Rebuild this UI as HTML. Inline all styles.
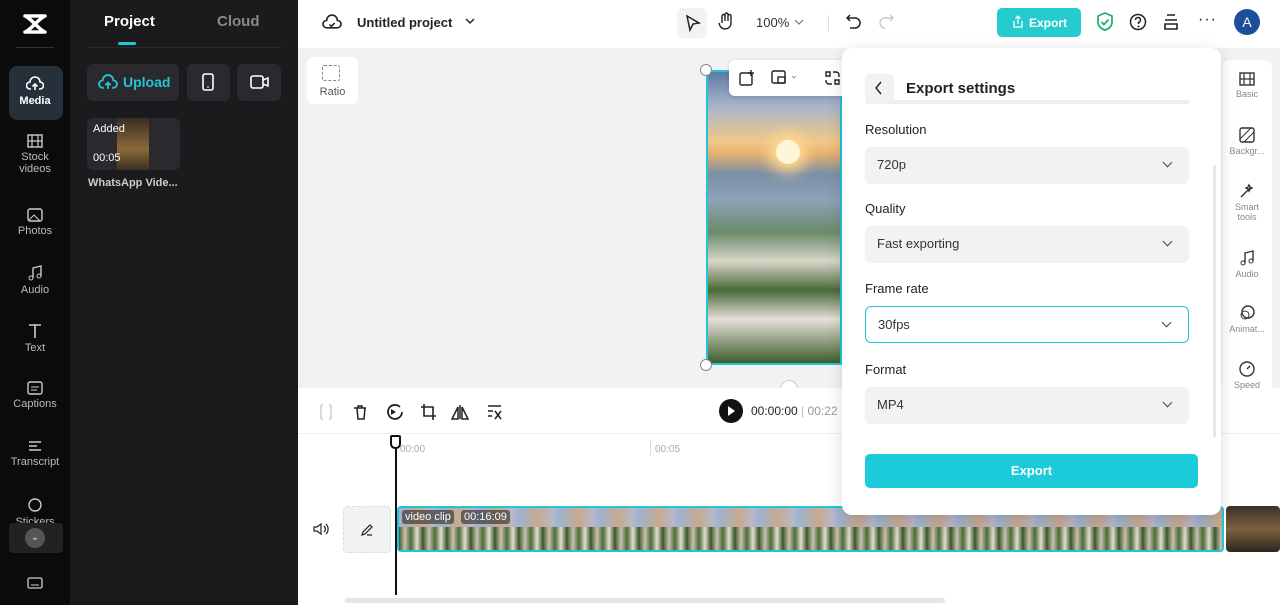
<!DOCTYPE html>
<html><head><meta charset="utf-8"><style>
*{box-sizing:border-box;margin:0;padding:0}
body{width:1280px;height:605px;overflow:hidden;font-family:"Liberation Sans",sans-serif;background:#fff;position:relative}
.abs{position:absolute}
.nav{left:0;top:0;width:70px;height:605px;background:#0b0b0c}
.navi{position:absolute;left:0;width:70px;text-align:center;color:#bbb;font-size:11px}
.navi svg{display:block;margin:0 auto 3px}
.panel{left:70px;top:0;width:228px;height:605px;background:#1b1b1e}
.top{left:298px;top:0;width:982px;height:48px;background:#fff}
.canvas{left:298px;top:48px;width:982px;height:340px;background:#f1f2f4}
.tl{left:298px;top:388px;width:982px;height:217px;background:#fff}
.sel{position:absolute;left:865px;width:324px;height:37px;background:#f1f2f4;border-radius:6px;font-size:13px;color:#333;padding:10px 12px}
.sel:after{content:"";position:absolute;right:18px;top:12px;width:6px;height:6px;border-right:1.5px solid #444;border-bottom:1.5px solid #444;transform:rotate(45deg)}
.lbl{position:absolute;left:865px;font-size:13px;color:#222}
.ri{position:absolute;left:1224px;width:46px;text-align:center;font-size:9px;color:#888}
.ri svg{display:block;margin:0 auto 3px}
</style></head><body>
<div class="abs nav">
  <svg class="abs" style="left:21px;top:12px" width="28" height="24" viewBox="0 0 28 24"><path d="M4 4h20M4 20h20M6 5C12 9 16 15 22 19M22 5C16 9 12 15 6 19" stroke="#fff" stroke-width="3.5" fill="none" stroke-linecap="round"/></svg>
  <div class="abs" style="left:16px;top:47px;width:38px;height:1px;background:#333"></div>
  <div class="abs" style="left:9px;top:66px;width:54px;height:54px;background:#26303a;border-radius:8px"></div>
  <div class="navi" style="top:76px;color:#fff;font-weight:bold"><svg width="18" height="16" viewBox="0 0 18 16"><path d="M5 13H4a3.5 3.5 0 0 1 0-7 5 5 0 0 1 10 0 3.5 3.5 0 0 1 0 7h-1M9 14V8M6.5 10.5L9 8l2.5 2.5" stroke="#fff" stroke-width="1.6" fill="none"/></svg>Media</div>
  <div class="navi" style="top:134px"><svg width="16" height="14"><rect x="1" y="1" width="14" height="12" stroke="#ccc" fill="none" stroke-width="1.4"/><path d="M5 1v12M11 1v12M1 7h14" stroke="#ccc" stroke-width="1.2"/></svg>Stock<br>videos</div>
  <div class="navi" style="top:208px"><svg width="16" height="14"><rect x="1" y="1" width="14" height="12" rx="2" stroke="#ccc" fill="none" stroke-width="1.4"/><path d="M2 12l5-5 6 6" stroke="#ccc" fill="none"/></svg>Photos</div>
  <div class="navi" style="top:265px"><svg width="16" height="16"><path d="M6 13V3l8-2v10" stroke="#ccc" fill="none" stroke-width="1.4"/><circle cx="4" cy="13" r="2" stroke="#ccc" fill="none"/><circle cx="12" cy="11" r="2" stroke="#ccc" fill="none"/></svg>Audio</div>
  <div class="navi" style="top:323px"><svg width="16" height="16"><path d="M2 2h12M8 2v13" stroke="#ccc" stroke-width="1.6"/></svg>Text</div>
  <div class="navi" style="top:381px"><svg width="16" height="14"><rect x="1" y="1" width="14" height="12" rx="2" stroke="#ccc" fill="none" stroke-width="1.4"/><path d="M4 6h8M4 9h6" stroke="#ccc"/></svg>Captions</div>
  <div class="navi" style="top:439px"><svg width="16" height="14"><path d="M2 3h12M2 7h8M2 11h12" stroke="#ccc" stroke-width="1.4"/></svg>Transcript</div>
  <div class="navi" style="top:497px"><svg width="16" height="16"><circle cx="8" cy="8" r="6" stroke="#ccc" fill="none" stroke-width="1.4"/></svg>Stickers</div>
  <div class="abs" style="left:9px;top:523px;width:54px;height:30px;background:#222;border-radius:4px"></div>
  <div class="abs" style="left:25px;top:528px;width:20px;height:20px;border-radius:50%;background:#555;color:#ddd;font-size:10px;text-align:center;line-height:20px">⌄</div>
  <svg class="abs" style="left:27px;top:577px" width="16" height="12"><rect x="1" y="1" width="14" height="10" rx="1.5" stroke="#ccc" fill="none" stroke-width="1.3"/><path d="M4 8h8" stroke="#ccc"/></svg>
</div>
<div class="abs panel">
  <div class="abs" style="left:34px;top:13px;color:#fff;font-weight:bold;font-size:15px">Project</div>
  <div class="abs" style="left:147px;top:13px;color:#888;font-weight:bold;font-size:15px">Cloud</div>
  <div class="abs" style="left:48px;top:42px;width:18px;height:3px;background:#20c5d8;border-radius:2px"></div>
  <div class="abs" style="left:18px;top:47px;width:193px;height:1px;background:#2c2c30"></div>
  <div class="abs" style="left:17px;top:64px;width:92px;height:37px;background:#2a2a2e;border-radius:6px;color:#25c3d6;font-weight:bold;font-size:14px;padding:10px 0 0 36px">Upload</div>
  <svg class="abs" style="left:28px;top:74px" width="20" height="17" viewBox="0 0 18 16"><path d="M5 13H4a3.5 3.5 0 0 1 0-7 5 5 0 0 1 10 0 3.5 3.5 0 0 1 0 7h-1M9 14V8M6.5 10.5L9 8l2.5 2.5" stroke="#25c3d6" stroke-width="1.7" fill="none"/></svg>
  <div class="abs" style="left:117px;top:64px;width:43px;height:37px;background:#2a2a2e;border-radius:6px"></div>
  <svg class="abs" style="left:132px;top:73px" width="12" height="18"><rect x="1" y="1" width="10" height="16" rx="2" stroke="#fff" fill="none" stroke-width="1.6"/><path d="M5 14h2" stroke="#fff"/></svg>
  <div class="abs" style="left:167px;top:64px;width:44px;height:37px;background:#2a2a2e;border-radius:6px"></div>
  <svg class="abs" style="left:180px;top:75px" width="20" height="14"><rect x="1" y="1" width="12" height="12" rx="2" stroke="#fff" fill="none" stroke-width="1.6"/><path d="M13 5l5-2v8l-5-2" stroke="#fff" fill="none" stroke-width="1.6"/></svg>
  <div class="abs" style="left:17px;top:118px;width:93px;height:52px;background:#2a2a2e;border-radius:6px;overflow:hidden"><div style="position:absolute;left:30px;top:0;width:32px;height:52px;background:linear-gradient(#3a2e22,#8a6a3a 60%,#3a3020)"></div></div>
  <div class="abs" style="left:23px;top:123px;color:#fff;font-size:11px">Added</div>
  <div class="abs" style="left:23px;top:152px;color:#fff;font-size:11px">00:05</div>
  <div class="abs" style="left:18px;top:177px;color:#ccc;font-size:11px;font-weight:bold">WhatsApp Vide...</div>
</div>
<div class="abs" style="left:298px;top:288px;width:8px;height:52px;background:#2a2a2e;border-radius:0 6px 6px 0"></div>
<div class="abs top">
  <svg class="abs" style="left:24px;top:14px" width="20" height="17" viewBox="0 0 18 16"><path d="M5 13H4a3.5 3.5 0 0 1 0-7 5 5 0 0 1 10 0 3.5 3.5 0 0 1 0 7zM6.5 10l2 1.5 3-3" stroke="#222" stroke-width="1.5" fill="none"/></svg>
  <div class="abs" style="left:59px;top:15px;font-size:13px;font-weight:bold;color:#222">Untitled project</div>
  <svg class="abs" style="left:167px;top:18px" width="10" height="7"><path d="M1 1l4 4 4-4" stroke="#222" stroke-width="1.5" fill="none"/></svg>
  <div class="abs" style="left:379px;top:8px;width:30px;height:30px;background:#f1f2f4;border-radius:6px"></div>
  <svg class="abs" style="left:387px;top:14px" width="16" height="18"><path d="M2 2l12 7-6 1-3 6z" stroke="#222" stroke-width="1.5" fill="none"/></svg>
  <svg class="abs" style="left:420px;top:12px" width="16" height="20"><path d="M4 11V4a1.5 1.5 0 0 1 3 0v5V2.5a1.5 1.5 0 0 1 3 0V9V4a1.5 1.5 0 0 1 3 0v8a6 6 0 0 1-11 2L1 11" stroke="#222" stroke-width="1.4" fill="none"/></svg>
  <div class="abs" style="left:458px;top:15px;font-size:13px;color:#333">100%</div>
  <svg class="abs" style="left:496px;top:19px" width="10" height="7"><path d="M1 1l4 4 4-4" stroke="#777" stroke-width="1.2" fill="none"/></svg>
  <div class="abs" style="left:530px;top:15px;width:1px;height:16px;background:#ddd"></div>
  <svg class="abs" style="left:548px;top:13px" width="16" height="18"><path d="M4 2L1 5l3 3M1 5h8a5 5 0 0 1 0 10H4" stroke="#222" stroke-width="1.5" fill="none"/></svg>
  <svg class="abs" style="left:580px;top:13px" width="16" height="18"><path d="M12 2l3 3-3 3M15 5H7a5 5 0 0 0 0 10" stroke="#ccc" stroke-width="1.5" fill="none"/></svg>
  <div class="abs" style="left:699px;top:8px;width:84px;height:29px;background:#26cbd0;border-radius:5px;color:#fff;font-size:12px;font-weight:bold;padding:8px 0 0 32px">Export</div>
  <svg class="abs" style="left:714px;top:15px" width="12" height="14"><path d="M2 6v6h8V6M6 9V1M3.5 3.5L6 1l2.5 2.5" stroke="#fff" stroke-width="1.3" fill="none"/></svg>
  <svg class="abs" style="left:798px;top:12px" width="18" height="20"><path d="M9 1l7 3v6c0 4-3 7-7 8-4-1-7-4-7-8V4z" stroke="#1fae6a" stroke-width="1.7" fill="none"/><path d="M5.5 10l2.5 2.5 4.5-5" stroke="#1fae6a" stroke-width="1.7" fill="none"/></svg>
  <svg class="abs" style="left:831px;top:13px" width="18" height="18"><circle cx="9" cy="9" r="7.5" stroke="#222" stroke-width="1.5" fill="none"/><path d="M6.5 7a2.5 2.5 0 1 1 3 2.4V11" stroke="#222" stroke-width="1.5" fill="none"/><circle cx="9.5" cy="13.5" r="1" fill="#222"/></svg>
  <svg class="abs" style="left:865px;top:13px" width="16" height="18"><path d="M4 2h8M2 7h12M2 11h12v5H2z" stroke="#222" stroke-width="1.6" fill="none"/></svg>
  <div class="abs" style="left:900px;top:11px;font-size:16px;color:#222;letter-spacing:1px">···</div>
  <div class="abs" style="left:936px;top:9px;width:26px;height:26px;border-radius:50%;background:#1b4f9a;color:#fff;font-size:14px;text-align:center;line-height:26px">A</div>
</div>
<div class="abs canvas"></div>
<div class="abs" style="left:307px;top:57px;width:51px;height:47px;background:#fff;border-radius:6px;font-size:11px;color:#555;text-align:center;padding-top:29px">Ratio</div>
<div class="abs" style="left:322px;top:65px;width:18px;height:16px;border:1.5px dashed #888;border-radius:2px"></div>
<div class="abs" style="left:706px;top:70px;width:136px;height:295px;border:2px solid #20c5d8;background:linear-gradient(180deg,#5c7aa8 0%,#a9b6c9 12%,#f2c788 24%,#e8b070 28%,#7a8fa6 35%,#8ea3b8 44%,#6b8a6a 55%,#d8d5c8 65%,#4a6a3a 75%,#e6e0d8 85%,#3c5c2c 100%)"></div>
<div class="abs" style="left:776px;top:140px;width:24px;height:24px;border-radius:50%;background:#fff6d8;box-shadow:0 0 14px 8px #ffd890"></div>
<div class="abs" style="left:700px;top:64px;width:12px;height:12px;border-radius:50%;background:#fff;border:1px solid #888"></div>
<div class="abs" style="left:700px;top:359px;width:12px;height:12px;border-radius:50%;background:#fff;border:1px solid #888"></div>
<div class="abs" style="left:780px;top:380px;width:18px;height:18px;border-radius:50%;background:#fff;border:1px solid #ccc"></div>
<div class="abs" style="left:729px;top:60px;width:120px;height:36px;background:#fff;border-radius:6px;box-shadow:0 1px 4px rgba(0,0,0,.12)"></div>
<svg class="abs" style="left:739px;top:70px" width="16" height="16"><rect x="1" y="3" width="12" height="12" rx="1.5" stroke="#222" stroke-width="1.4" fill="none"/><path d="M12 0v6M9 3h6" stroke="#222" stroke-width="1.4"/></svg>
<svg class="abs" style="left:771px;top:70px" width="26" height="16"><rect x="1" y="1" width="13" height="12" rx="1.5" stroke="#222" stroke-width="1.4" fill="none"/><rect x="7" y="7" width="7" height="6" stroke="#222" stroke-width="1.4" fill="none"/><path d="M21 6l2 2 2-2" stroke="#999" fill="none"/></svg>
<svg class="abs" style="left:825px;top:70px" width="16" height="16"><path d="M1 2h4v4H1zM8 2h3a3 3 0 0 1 3 3v2M1 10v1a3 3 0 0 0 3 3h3M10 10h4v4h-4z" stroke="#222" stroke-width="1.4" fill="none"/></svg>
<div class="abs tl"></div>
<div class="abs" style="left:298px;top:433px;width:982px;height:1px;background:#eceef0"></div>
<svg class="abs" style="left:318px;top:403px" width="200" height="18">
<path d="M3 2v14M13 2v14M3 2h2M3 16h2M11 2h2M11 16h2" stroke="#ccc" stroke-width="1.4"/>
<path d="M36 5h12M39 5l1 11h6l1-11M40 5V3h4v2" stroke="#222" stroke-width="1.5" fill="none"/>
<path d="M82 4a7 7 0 1 0 2 5" stroke="#222" stroke-width="1.8" fill="none"/><path d="M73 6l5 3-5 3z" fill="#222"/>
<path d="M106 1v12h12M103 4h12v13" stroke="#222" stroke-width="1.6" fill="none"/>
<path d="M142 2v14M140 16h-6l6-12zM144 4l6 12h-6z" stroke="#222" stroke-width="1.5" fill="none"/>
<path d="M170 3h13M170 8h5M170 13h4M177 8l6 8M183 8l-6 8" stroke="#222" stroke-width="1.5" fill="none"/>
</svg>
<div class="abs" style="left:719px;top:399px;width:24px;height:24px;border-radius:50%;background:#111"></div>
<div class="abs" style="left:728px;top:406px;width:0;height:0;border-left:7px solid #fff;border-top:5px solid transparent;border-bottom:5px solid transparent"></div>
<div class="abs" style="left:751px;top:404px;font-size:12px;color:#222">00:00:00 <span style="color:#bbb">|</span> <span style="color:#999">00:22</span></div>
<div class="abs" style="left:400px;top:444px;font-size:10px;color:#aaa">00:00</div>
<div class="abs" style="left:650px;top:440px;width:1px;height:16px;background:#ddd"></div>
<div class="abs" style="left:655px;top:444px;font-size:10px;color:#aaa">00:05</div>
<svg class="abs" style="left:313px;top:522px" width="16" height="14"><path d="M1 5h3l4-3v10l-4-3H1z M11 4a4 4 0 0 1 0 6M13 2a7 7 0 0 1 0 10" stroke="#222" stroke-width="1.2" fill="none"/></svg>
<div class="abs" style="left:343px;top:506px;width:48px;height:47px;background:#f1f2f4;border:1px dashed #ddd;border-radius:4px"></div>
<svg class="abs" style="left:360px;top:523px" width="14" height="14"><path d="M2 12l1-3 7-7 2 2-7 7zM7 12h5" stroke="#222" stroke-width="1.2" fill="none"/></svg>
<div class="abs" style="left:397px;top:506px;width:827px;height:46px;border:2px solid #20c5d8;border-radius:4px;background:repeating-linear-gradient(90deg,#9eb3cf 0,#c9a98e 20px,#b8b8c8 33px,#9eb3cf 40px)"></div>
<div class="abs" style="left:399px;top:527px;width:823px;height:23px;background:repeating-linear-gradient(90deg,#3d5a2c 0,#c9c0b0 6px,#4d6a34 12px,#e2dcd2 18px,#3a5528 24px)"></div>
<div class="abs" style="left:1226px;top:506px;width:54px;height:46px;background:linear-gradient(#3a3028,#806040,#2a2820);border-radius:4px"></div>
<div class="abs" style="left:402px;top:510px;padding:1px 3px;font-size:11px;color:#fff;background:rgba(40,40,40,.6);border-radius:3px">video clip</div>
<div class="abs" style="left:461px;top:510px;padding:1px 3px;font-size:11px;color:#fff;background:rgba(40,40,40,.6);border-radius:3px">00:16:09</div>
<div class="abs" style="left:395px;top:447px;width:2px;height:148px;background:#111"></div>
<div class="abs" style="left:390px;top:435px;width:11px;height:14px;background:#fff;border:2px solid #111;border-radius:2px 2px 5px 5px"></div>
<div class="abs" style="left:345px;top:598px;width:600px;height:5px;background:#e4e5e7;border-radius:3px"></div>
<div class="abs" style="left:1222px;top:60px;width:50px;height:340px;background:#fff;border-radius:8px"></div>
<div class="ri" style="top:72px"><svg width="16" height="14"><rect x="1" y="1" width="14" height="12" stroke="#333" fill="none" stroke-width="1.4"/><path d="M5 1v12M11 1v12M1 7h14" stroke="#333" stroke-width="1.2"/></svg>Basic</div>
<div class="ri" style="top:127px"><svg width="16" height="16"><rect x="1" y="1" width="14" height="14" rx="2" stroke="#333" fill="none" stroke-width="1.4"/><path d="M1 12L12 1M5 15L15 5" stroke="#333"/></svg>Backgr...</div>
<div class="ri" style="top:183px"><svg width="16" height="16"><path d="M2 14L11 5M10 2l1 2 2 1-2 1-1 2-1-2-2-1 2-1z" stroke="#333" stroke-width="1.4" fill="none"/></svg>Smart<br>tools</div>
<div class="ri" style="top:250px"><svg width="16" height="16"><path d="M6 13V3l8-2v10" stroke="#333" fill="none" stroke-width="1.4"/><circle cx="4" cy="13" r="2" stroke="#333" fill="none"/><circle cx="12" cy="11" r="2" stroke="#333" fill="none"/></svg>Audio</div>
<div class="ri" style="top:305px"><svg width="16" height="16"><circle cx="9" cy="7" r="6" stroke="#333" fill="none" stroke-width="1.4"/><circle cx="6" cy="10" r="4" stroke="#333" fill="none"/></svg>Animat...</div>
<div class="ri" style="top:361px"><svg width="16" height="16"><circle cx="8" cy="8" r="7" stroke="#333" fill="none" stroke-width="1.4"/><path d="M8 8l3-3" stroke="#333" stroke-width="1.5"/></svg>Speed</div>
<div class="abs" style="left:842px;top:48px;width:379px;height:467px;background:#fff;border-radius:10px;box-shadow:0 4px 16px rgba(0,0,0,.15)"></div>
<div class="abs" style="left:865px;top:100px;width:324px;height:4px;background:#eceef0;border-radius:2px"></div>
<div class="abs" style="left:865px;top:74px;width:29px;height:29px;background:#f1f2f4;border-radius:5px"></div>
<svg class="abs" style="left:875px;top:81px" width="8" height="14"><path d="M6 1L1 7l5 6" stroke="#222" stroke-width="1.4" fill="none"/></svg>
<div class="abs" style="left:906px;top:80px;font-size:15px;font-weight:bold;color:#222">Export settings</div>
<div class="abs" style="left:1213px;top:165px;width:3px;height:272px;background:#e6e6e6;border-radius:2px"></div>
<div class="lbl" style="top:122px">Resolution</div>
<div class="sel" style="top:147px">720p</div>
<div class="lbl" style="top:201px">Quality</div>
<div class="sel" style="top:226px">Fast exporting</div>
<div class="lbl" style="top:281px">Frame rate</div>
<div class="sel" style="top:306px;background:#fff;border:1.5px solid #20c5d8">30fps</div>
<div class="lbl" style="top:362px">Format</div>
<div class="sel" style="top:387px">MP4</div>
<div class="abs" style="left:865px;top:454px;width:333px;height:34px;background:#1ccbd9;border-radius:5px;color:#fff;font-size:13px;font-weight:bold;text-align:center;line-height:34px">Export</div>
</body></html>
